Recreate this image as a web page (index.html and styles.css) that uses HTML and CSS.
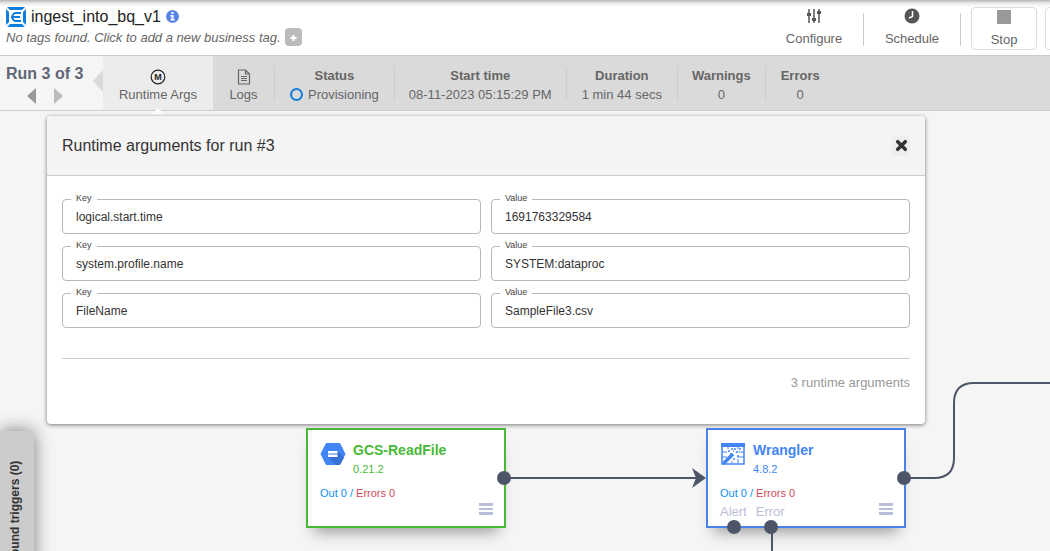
FILE: index.html
```html
<!DOCTYPE html>
<html lang="en">
<head>
<meta charset="utf-8">
<meta name="viewport" content="width=device-width, initial-scale=1">
<title>ingest_into_bq_v1</title>
<link rel="stylesheet" href="styles.css">
</head>
<body>
<div class="app">
  <header class="topbar">
    <div class="identity">
      <div class="title-row">
        <svg class="logo" viewBox="0 0 20 20" aria-hidden="true">
          <path d="M1 0h18l-3 3H4zM1 20h18l-3-3H4zM0 2l3 3v10l-3 3zM20 2l-3 3v10l3 3z" fill="#0f7ddb"/>
          <path d="M15 6H10Q7 6 6 10Q7 14 10 14H15M6 10H14" fill="none" stroke="#0f7ddb" stroke-width="2"/>
        </svg>
        <h1 class="pipeline-name">ingest_into_bq_v1</h1>
        <svg class="info" viewBox="0 0 13 13" aria-label="Info" role="img">
          <circle cx="6.500" cy="6.500" r="6.500" fill="#5a84e4"/>
          <path d="M5.500 2h2v2h-2zM4.500 5h3v4h1v1.500h-4V9h1V6.500h-1z" fill="#fff"/>
        </svg>
      </div>
      <div class="tag-row">
        <span class="tag-hint">No tags found. Click to add a new business tag.</span>
        <button class="add-tag" type="button" aria-label="Add tag"><svg viewBox="0 0 17 17"><path d="M8.500 6v6M5.500 9h6" stroke="#fff" stroke-width="2"/></svg></button>
      </div>
    </div>
    <nav class="actions">
      <button class="action" type="button">
        <svg viewBox="0 0 14 16" aria-hidden="true"><path d="M2 1v14M7 1v14M12 1v14" stroke="#555" stroke-width="1.500"/><path d="M0 5h4v3H0zM5 10h4v3H5zM10 3h4v3h-4z" fill="#555"/></svg>
        <span>Configure</span>
      </button>
      <button class="action schedule" type="button">
        <svg viewBox="0 0 16 16" aria-hidden="true"><circle cx="8" cy="8" r="7.500" fill="#555"/><path d="M8.500 3v5.500L5 10" fill="none" stroke="#fff" stroke-width="1.500"/></svg>
        <span>Schedule</span>
      </button>
      <button class="action stop" type="button">
        <svg viewBox="0 0 16 16" aria-hidden="true"><path d="M1 1h14v14H1z" fill="#999"/></svg>
        <span>Stop</span>
      </button>
      <button class="action more" type="button" aria-label="More"></button>
    </nav>
  </header>

  <section class="runbar">
    <div class="run-nav">
      <div class="run-count">Run 3 of 3</div>
      <div class="run-arrows">
        <button class="arrow" type="button" aria-label="Previous run"><svg viewBox="0 0 9 16"><path d="M9 0v16L0 8z" fill="#999"/></svg></button>
        <button class="arrow" type="button" aria-label="Next run"><svg viewBox="0 0 9 16"><path d="M0 0v16l9-8z" fill="#bbb"/></svg></button>
      </div>
      <span class="run-pointer"></span>
    </div>
    <button class="run-tab selected" type="button">
      <svg viewBox="0 0 16 16" aria-hidden="true"><circle cx="8" cy="8" r="6.800" fill="none" stroke="#222" stroke-width="1.200"/><text class="icon-letter" x="8" y="11" text-anchor="middle">M</text></svg>
      <span>Runtime Args</span>
      <span class="tab-pointer"></span>
    </button>
    <button class="run-tab logs" type="button">
      <svg viewBox="0 0 16 16" aria-hidden="true"><path d="M2.500 1h7l4 4v10h-11zM9.500 1v4h4" fill="none" stroke="#666" stroke-width="1.200"/><path d="M5 7.500h6M5 9.500h6M5 11.500h6" stroke="#666"/></svg>
      <span>Logs</span>
    </button>
    <dl class="stats">
      <div class="stat wide"><dt>Status</dt><dd><span class="ring"></span>Provisioning</dd></div>
      <div class="stat"><dt>Start time</dt><dd>08-11-2023 05:15:29 PM</dd></div>
      <div class="stat wide"><dt>Duration</dt><dd>1 min 44 secs</dd></div>
      <div class="stat"><dt>Warnings</dt><dd>0</dd></div>
      <div class="stat wide"><dt>Errors</dt><dd>0</dd></div>
    </dl>
  </section>

  <main class="workspace">
    <section class="dialog" role="dialog" aria-labelledby="dialog-title">
      <header class="dialog-head">
        <h2 id="dialog-title">Runtime arguments for run #3</h2>
        <button class="close" type="button" aria-label="Close"><svg viewBox="0 0 12 12"><path d="M2.500 2.500l7 7M9.500 2.500l-7 7" stroke="#333" stroke-width="3.200" stroke-linecap="round"/></svg></button>
      </header>
      <div class="dialog-body">
        <div class="args">
          <fieldset class="field"><legend><label for="k1">Key</label></legend><input id="k1" value="logical.start.time" readonly></fieldset>
          <fieldset class="field"><legend><label for="v1">Value</label></legend><input id="v1" value="1691763329584" readonly></fieldset>
          <fieldset class="field"><legend><label for="k2">Key</label></legend><input id="k2" value="system.profile.name" readonly></fieldset>
          <fieldset class="field"><legend><label for="v2">Value</label></legend><input id="v2" value="SYSTEM:dataproc" readonly></fieldset>
          <fieldset class="field"><legend><label for="k3">Key</label></legend><input id="k3" value="FileName" readonly></fieldset>
          <fieldset class="field"><legend><label for="v3">Value</label></legend><input id="v3" value="SampleFile3.csv" readonly></fieldset>
        </div>
        <p class="arg-count">3 runtime arguments</p>
      </div>
    </section>

    <div class="canvas">
      <article class="node source">
        <div class="node-head">
          <svg class="node-icon" viewBox="0 0 26 26" aria-hidden="true">
            <path d="M7 2h12q1 0 1.500 1L25.500 13l-5 10q-.5 1-1.500 1H7q-1 0-1.500-1L.5 13 5.500 3Q6 2 7 2z" fill="#4285f4"/>
            <path d="M17.500 10l6.500 6.500-3.500 6.500q-.5 1-1.500 1h-3L8 16z" fill="#3871d6"/>
            <path d="M8 10h9.500v2.500H8zM8 13.500h9.500V16H8z" fill="#fff"/>
          </svg>
          <div><h3>GCS-ReadFile</h3><div class="version">0.21.2</div></div>
        </div>
        <div class="metrics"><span class="out">Out 0 /</span> <span class="err">Errors 0</span></div>
        <button class="node-menu" type="button" aria-label="Node menu"></button>
      </article>
      <article class="node transform">
        <div class="node-head">
          <svg class="node-icon" viewBox="0 0 26 26" aria-hidden="true">
            <path d="M2 3h22v20H2z" fill="#fff" stroke="#4285f4" stroke-width="1.500"/>
            <path d="M1 2h24v4H1z" fill="#4285f4"/>
            <path d="M2 11h5M2 16h5M19 11h5M17 16h7M8 6v2M18 6v2M18 18v4M12 20v2" stroke="#4285f4"/>
            <path d="M3.500 22.500L13 13" stroke="#4285f4" stroke-width="3.500"/>
            <path d="M8 10h2M11 8h2M15 7v2M18 10l-2 2M10 13h1M17 15h2M14 17v2M19 8h2M13 10h1" stroke="#4285f4" stroke-width="1.500"/>
          </svg>
          <div><h3>Wrangler</h3><div class="version">4.8.2</div></div>
        </div>
        <div class="metrics"><span class="out">Out 0 /</span> <span class="err">Errors 0</span></div>
        <div class="ports"><span>Alert</span><span>Error</span></div>
        <button class="node-menu" type="button" aria-label="Node menu"></button>
      </article>
      <svg class="wires" width="1050" height="440" viewBox="0 0 1050 440" aria-hidden="true">
        <g fill="none" stroke="#4e5568" stroke-width="2">
          <path d="M504 367H696M904 367H934Q954 367 954 347V292Q954 272 974 272H1050M772 416V440"/>
        </g>
        <g fill="#4e5568">
          <path d="M692 357l14 10-14 10 4-10z"/>
          <circle cx="504" cy="367" r="7"/><circle cx="904" cy="367" r="7"/><circle cx="734" cy="416" r="7"/><circle cx="771" cy="416" r="7"/>
        </g>
      </svg>
    </div>
    <button class="triggers" type="button">Inbound triggers (0)</button>
  </main>
</div>
</body>
</html>
```
FILE: styles.css
```css
* { box-sizing: border-box; }
body { margin: 0; font-family: "Liberation Sans", Arial, sans-serif; font-size: 13px; color: #666; background: #f5f5f5; }
button { font: inherit; color: inherit; border: 0; padding: 0; background: none; cursor: pointer; }
h1, h2, h3, p, dl, dd { margin: 0; }
svg { display: block; }
.app { min-height: 100vh; display: flex; flex-direction: column; overflow: hidden; }

.topbar { display: flex; justify-content: space-between; height: 56px; background: linear-gradient(#b5b5b5, #e8e8e8 3px, #fff 7px); border-bottom: 1px solid #ccc; overflow: hidden; }
.identity { padding: 6px 0 0 6px; }
.title-row { display: flex; align-items: center; gap: 5px; height: 21px; }
.logo { width: 20px; height: 20px; }
.pipeline-name { font-size: 16px; font-weight: 400; line-height: 20px; color: #222; }
.info { width: 13px; height: 13px; }
.tag-row { display: flex; align-items: center; gap: 4px; height: 20px; }
.tag-hint { font-style: italic; }
.add-tag { width: 17px; height: 18px; border-radius: 4px; background: #bbb; }
.actions { display: flex; align-items: flex-start; padding-top: 7px; margin-right: -61px; }
.action { display: flex; flex-direction: column; align-items: center; gap: 7px; height: 43px; padding-top: 1px; line-height: 16px; width: 98px; }
.action svg { height: 16px; width: 16px; }
.schedule { border: solid #ccc; border-width: 0 1px; margin-top: 6px; height: 33px; }
.schedule svg { margin-top: -6px; flex: none; }
.stop, .more { width: 66px; border: 1px solid #ddd; border-radius: 4px; margin-left: 10px; }
.more { margin-left: 8px; }

.runbar { display: flex; height: 55px; background: #dadada; border-bottom: 1px solid #ccc; white-space: nowrap; }
.run-nav { position: relative; width: 103px; background: #f5f5f5; padding: 8px 0 0 6px; }
.run-count { font-size: 16px; line-height: 20px; font-weight: 700; color: #5f6675; }
.run-arrows { display: flex; gap: 18px; padding: 4px 0 0 21px; }
.arrow svg { width: 9px; height: 16px; }
.run-pointer { position: absolute; right: 0; top: 14px; border: solid transparent; border-width: 11px 10px 11px 0; border-right-color: #dadada; }
.run-tab { position: relative; display: flex; flex-direction: column; align-items: center; justify-content: center; gap: 2px; width: 61px; line-height: 16px; padding-top: 5px; }
.run-tab svg { width: 16px; height: 16px; }
.icon-letter { font-size: 9px; font-weight: 700; fill: #222; }
.selected { width: 110px; background: #ececec; }
.tab-pointer { position: absolute; bottom: -5px; left: 48px; border: solid transparent; border-width: 0 7px 7px; border-bottom-color: #fff; z-index: 2; }
.stats { display: flex; padding-top: 11px; }
.stat { height: 33px; padding: 0 14px; border-left: 1px solid #ccc; text-align: center; line-height: 19px; }
.wide { padding: 0 15px; }
.stat dt { font-weight: 700; line-height: 18px; }
.stat dd { display: flex; align-items: center; justify-content: center; }
.ring { width: 13px; height: 13px; border: 2px solid #0f7ddb; border-radius: 50%; margin-right: 5px; }

.workspace { position: relative; flex: 1; min-height: 440px; }
.dialog { position: absolute; z-index: 3; top: 5px; left: 47px; right: 125px; background: #fff; border-radius: 4px; box-shadow: 0 1px 4px #777; }
.dialog-head { display: flex; align-items: center; justify-content: space-between; height: 60px; padding: 0 15px; background: #f4f4f4; border-bottom: 1px solid #ccc; border-radius: 4px 4px 0 0; }
.dialog-head h2 { font-size: 16px; font-weight: 400; color: #333; }
.close { display: grid; place-items: center; width: 18px; height: 20px; border-radius: 3px; background: #eee; }
.close svg { width: 13px; height: 13px; }
.dialog-body { padding: 16px 15px 33px; }
.args { display: grid; grid-template-columns: 1fr 1fr; gap: 5px 10px; padding-bottom: 30px; border-bottom: 1px solid #ccc; }
.field { min-width: 0; height: 42px; margin: 0; padding: 0 8px; border: 1px solid #b8b8b8; border-radius: 4px; color: #444; }
.field legend { padding: 0 5px 2px; font-size: 9px; line-height: 12px; }
.field input { display: block; width: 100%; height: 22px; border: 0; padding: 0 5px; font: 12px "Liberation Sans", Arial, sans-serif; color: #333; background: none; outline: 0; }
.arg-count { padding-top: 16px; text-align: right; line-height: 16px; color: #999; }

.canvas { position: absolute; inset: 0; overflow: hidden; }
.node { position: absolute; top: 317px; width: 200px; height: 100px; padding: 12px 12px 0; border: 2px solid; background: #fff; box-shadow: 0 12px 14px -8px #999; }
.source { left: 306px; color: #48b936; border-color: #48b936; }
.transform { left: 706px; color: #4285f4; border-color: #4682e8; }
.node-head { display: flex; gap: 7px; height: 40px; }
.node-icon { width: 26px; height: 26px; margin-top: -1px; }
.node h3 { font-size: 14px; line-height: 16px; }
.version { font-size: 11px; line-height: 22px; }
.metrics { padding-top: 4px; font-size: 11px; line-height: 14px; }
.out { color: #0f8ff2; }
.err { color: #d04b5a; }
.ports { display: flex; gap: 9px; font-size: 13px; line-height: 24px; color: #b9bfd5; }
.node-menu { position: absolute; right: 11px; bottom: 11px; width: 14px; height: 12px; background: linear-gradient(#b9bfd9 3px, transparent 3px 5px, #b9bfd9 5px 7px, transparent 7px 9px, #b9bfd9 9px); }
.wires { position: absolute; left: 0; top: 0; }
.triggers { position: absolute; top: 320px; left: 0; width: 34px; height: 170px; padding: 0 0 30px 4px; display: flex; align-items: center; justify-content: flex-end; writing-mode: vertical-rl; transform: rotate(180deg); border-radius: 0 0 0 6px; background: #ccc; color: #333; font-size: 12px; font-weight: 700; box-shadow: 0 0 18px #777; }
```
